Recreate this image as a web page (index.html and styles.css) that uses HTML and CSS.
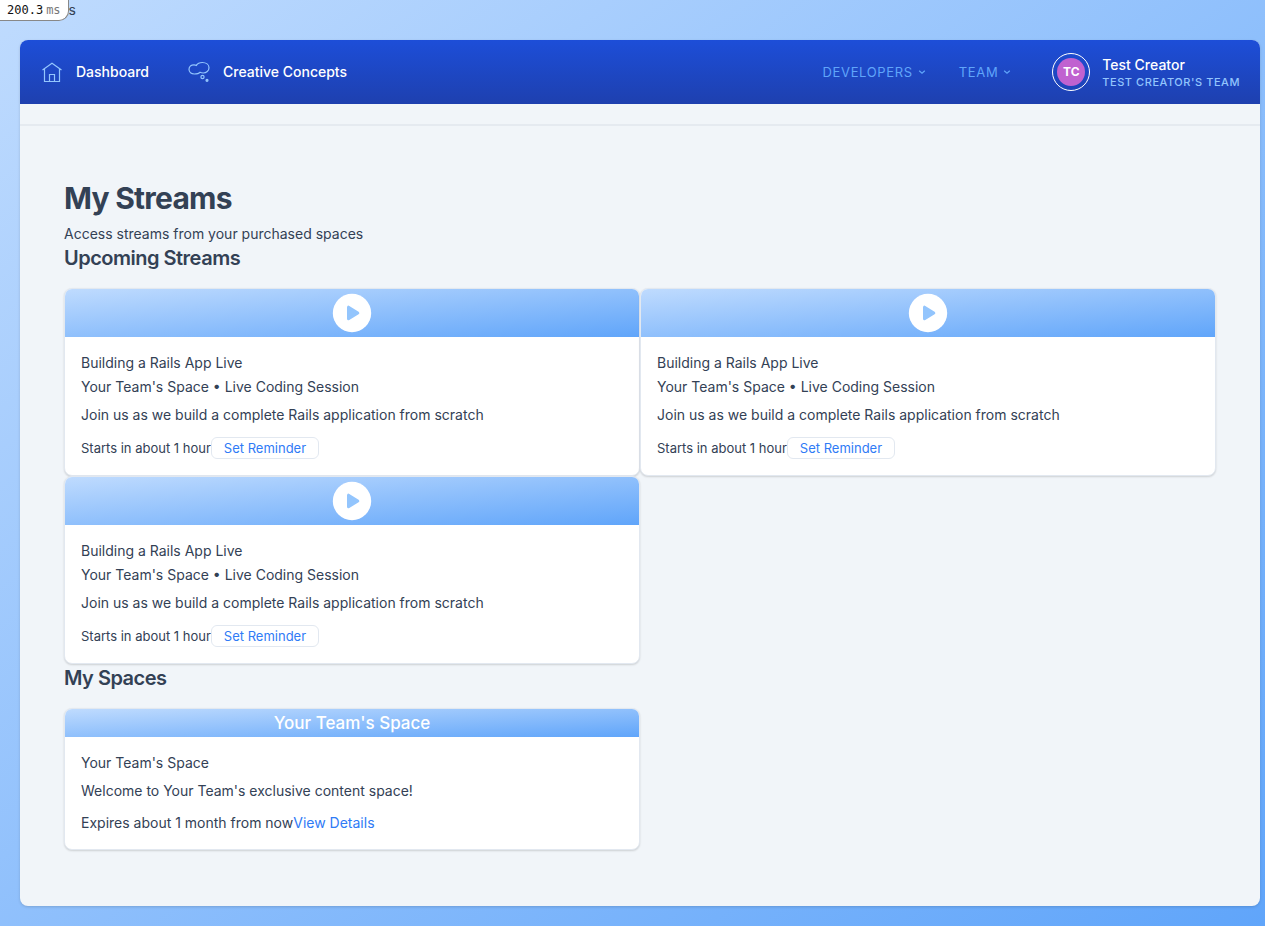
FILE: index.html
```html
<!DOCTYPE html>
<html lang="en">
<head>
<meta charset="utf-8">
<meta name="viewport" content="width=device-width, initial-scale=1">
<title>My Streams</title>
<link rel="stylesheet" href="styles.css">
</head>
<body>
<div class="topline">
  <div class="profiler"><span class="profiler-time">200.3</span><span class="profiler-unit">ms</span></div>
  <span>s</span>
</div>
<div class="panel">
  <header class="nav">
    <nav class="nav-main">
      <a class="nav-link" href="#">
        <svg class="nav-icon" viewBox="0 0 24 24" aria-hidden="true"><path d="M2.500 10 12 3.200l9.500 6.800M4.500 9v12.500h15V9M9.500 21.500v-7h5v7"/></svg>
        Dashboard
      </a>
      <a class="nav-link" href="#">
        <svg class="nav-icon" viewBox="0 0 24 24" aria-hidden="true"><path d="M13 12.300C11.800 13.700 9.500 14 7.300 14 4.300 14 2 12.200 2 9.300 2 6.500 4.300 4.800 7 4.800c1 0 1.700.2 2.400.6C10.500 3.400 12.700 2.500 15.300 2.500c3.800 0 6.700 2 6.700 5.200s-2.700 5.300-5.800 5.300c-1.200 0-2.200-.2-3.200-.7z"/><circle cx="15.500" cy="17" r="1.600"/><circle class="dot" cx="20" cy="20.300" r="1"/></svg>
        Creative Concepts
      </a>
    </nav>
    <div class="nav-side">
      <button class="nav-menu" type="button">Developers <svg class="chevron" viewBox="0 0 8 8" aria-hidden="true"><path d="M1.200 2.800 4 5.300 6.800 2.800"/></svg></button>
      <button class="nav-menu" type="button">Team <svg class="chevron" viewBox="0 0 8 8" aria-hidden="true"><path d="M1.200 2.800 4 5.300 6.800 2.800"/></svg></button>
      <a class="account" href="#">
        <span class="avatar-ring"><span class="avatar">TC</span></span>
        <span class="account-text"><span class="account-name">Test Creator</span><span class="account-team">Test Creator's Team</span></span>
      </a>
    </div>
  </header>
  <div class="subbar"></div>
  <main class="content">
    <h1>My Streams</h1>
    <p class="intro">Access streams from your purchased spaces</p>
    <section>
      <h2>Upcoming Streams</h2>
      <div class="grid">
        <article class="card">
          <div class="cover"><svg class="play" viewBox="0 0 48 48" aria-hidden="true"><circle cx="24" cy="24" r="19.200"/><path d="M20.500 18.200v11.600l9.300-5.800z"/></svg></div>
          <div class="card-body">
            <h3>Building a Rails App Live</h3>
            <p class="meta">Your Team's Space • Live Coding Session</p>
            <p class="description">Join us as we build a complete Rails application from scratch</p>
            <div class="card-footer starts"><span>Starts in about 1 hour</span><button class="reminder" type="button">Set Reminder</button></div>
          </div>
        </article>
        <article class="card">
          <div class="cover"><svg class="play" viewBox="0 0 48 48" aria-hidden="true"><circle cx="24" cy="24" r="19.200"/><path d="M20.500 18.200v11.600l9.300-5.800z"/></svg></div>
          <div class="card-body">
            <h3>Building a Rails App Live</h3>
            <p class="meta">Your Team's Space • Live Coding Session</p>
            <p class="description">Join us as we build a complete Rails application from scratch</p>
            <div class="card-footer starts"><span>Starts in about 1 hour</span><button class="reminder" type="button">Set Reminder</button></div>
          </div>
        </article>
        <article class="card">
          <div class="cover"><svg class="play" viewBox="0 0 48 48" aria-hidden="true"><circle cx="24" cy="24" r="19.200"/><path d="M20.500 18.200v11.600l9.300-5.800z"/></svg></div>
          <div class="card-body">
            <h3>Building a Rails App Live</h3>
            <p class="meta">Your Team's Space • Live Coding Session</p>
            <p class="description">Join us as we build a complete Rails application from scratch</p>
            <div class="card-footer starts"><span>Starts in about 1 hour</span><button class="reminder" type="button">Set Reminder</button></div>
          </div>
        </article>
      </div>
    </section>
    <section>
      <h2>My Spaces</h2>
      <div class="grid">
        <article class="card">
          <div class="cover cover-title">Your Team's Space</div>
          <div class="card-body">
            <h3>Your Team's Space</h3>
            <p class="description">Welcome to Your Team's exclusive content space!</p>
            <div class="card-footer"><span>Expires about 1 month from now</span><a class="details" href="#">View Details</a></div>
          </div>
        </article>
      </div>
    </section>
  </main>
</div>
</body>
</html>
```

FILE: styles.css
```css
* { box-sizing: border-box; }

body {
  margin: 0;
  min-height: 100vh;
  display: flex;
  flex-direction: column;
  background: linear-gradient(to bottom right, #bfdbfe, #60a5fa);
  color: #334155;
  font: 14px/20px Inter, "Liberation Sans", sans-serif;
}

h1, h2, h3, p { margin: 0; }
a { color: inherit; text-decoration: none; }
button { font: inherit; cursor: pointer; }

.topline { display: flex; }
.profiler {
  display: flex;
  gap: 3px;
  padding: 0 7px;
  border: solid #888;
  border-width: 0 1px 1px 0;
  border-radius: 0 0 10px 0;
  background: #fff;
  color: #111;
  font: 12px/20px "DejaVu Sans Mono", monospace;
}
.profiler-unit { color: #777; }

.panel {
  flex: 1;
  margin: 19px 5px 20px 20px;
  border-radius: 8px;
  background: #f1f5f9;
  box-shadow: 0 1px 3px rgba(0, 0, 0, 0.15);
  overflow: hidden;
}

.nav {
  display: flex;
  align-items: center;
  justify-content: space-between;
  height: 64px;
  padding: 0 20px;
  background: linear-gradient(to bottom, #1d4ed8, #1e40af);
}
.nav-main { display: flex; gap: 38px; }
.nav-link {
  display: flex;
  align-items: center;
  gap: 12px;
  color: #fff;
  font-weight: 500;
}
.nav-icon {
  width: 24px;
  height: 24px;
  fill: none;
  stroke: #93c5fd;
  stroke-width: 1.2;
}
.dot { fill: #93c5fd; }

.nav-side { display: flex; align-items: center; }
.nav-menu {
  display: flex;
  align-items: center;
  gap: 5px;
  margin-right: 33px;
  padding: 0;
  border: 0;
  background: none;
  color: #60a5fa;
  font-size: 13px;
  letter-spacing: 0.05em;
  text-transform: uppercase;
}
.chevron {
  width: 8px;
  height: 8px;
  fill: none;
  stroke: currentColor;
  stroke-width: 1.2;
}
.account {
  display: flex;
  align-items: center;
  gap: 12px;
  margin-left: 8px;
}
.avatar-ring {
  padding: 4px;
  border: 1px solid #fff;
  border-radius: 50%;
}
.avatar {
  display: block;
  width: 28px;
  height: 28px;
  border-radius: 50%;
  background: #c062d0;
  color: #fff;
  font-size: 12px;
  line-height: 28px;
  font-weight: 700;
  text-align: center;
}
.account-text { display: flex; flex-direction: column; padding-top: 2px; }
.account-name { color: #fff; font-weight: 500; line-height: 18px; }
.account-team {
  color: #93c5fd;
  font-size: 11px;
  font-weight: 500;
  line-height: 16px;
  letter-spacing: 0.05em;
  text-transform: uppercase;
}

.subbar { height: 22px; border-bottom: 2px solid #e5eaf0; }

.content { padding: 54px 44px 56px; }
h1 {
  margin-bottom: 8px;
  font-size: 30px;
  line-height: 36px;
  font-weight: 700;
  letter-spacing: -0.025em;
}
h2 {
  margin-bottom: 16px;
  font-size: 20px;
  line-height: 28px;
  font-weight: 600;
  letter-spacing: -0.025em;
}
h3 { font: inherit; }

.grid { display: grid; grid-template-columns: 1fr 1fr; }
.card {
  border: 1px solid #e2e8f0;
  border-radius: 8px;
  background: #fff;
  box-shadow: 0 1px 2px rgba(0, 0, 0, 0.15);
  overflow: hidden;
}
.cover {
  display: flex;
  justify-content: center;
  background: linear-gradient(to bottom right, #bfdbfe, #60a5fa);
}
.cover-title { color: #fff; font-size: 17px; line-height: 28px; font-weight: 500; }
.play { width: 48px; height: 48px; fill: #fff; }
.play path {
  fill: #93c5fd;
  stroke: #93c5fd;
  stroke-width: 3;
  stroke-linejoin: round;
}
.card-body { padding: 16px; }
.meta { margin-top: 4px; }
.description { margin-top: 8px; }
.card-footer { display: flex; align-items: center; margin-top: 12px; }
.starts { font-size: 13px; }
.reminder {
  padding: 0 12px;
  border: 1px solid #e2e8f0;
  border-radius: 6px;
  background: #fff;
  color: #2f7bf6;
}
.details { color: #2f7bf6; }
```
